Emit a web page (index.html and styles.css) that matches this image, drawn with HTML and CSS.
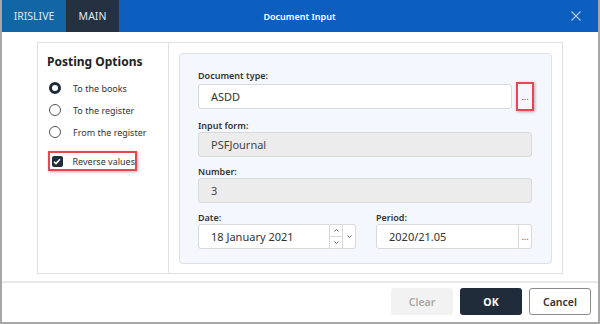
FILE: index.html
```html
<!DOCTYPE html>
<html lang="en">
<head>
  <meta charset="UTF-8" />
  <title>Document Input</title>
  <link rel="stylesheet" href="styles.css">
</head>
<body>
  <div class="window">
    <header class="titlebar">
      <div class="tab tab-iris">IRISLIVE</div>
      <div class="tab tab-main">MAIN</div>
      <div class="title">Document Input</div>
      <div class="close">
        <svg width="10" height="10" viewBox="0 0 10 10"><path d="M0.5 0.5 L9.5 9.5 M9.5 0.5 L0.5 9.5" stroke="#b5cbe6" stroke-width="1.1"/></svg>
      </div>
    </header>

    <div class="content">
      <div class="panel">
        <div class="options">
          <h3>Posting Options</h3>
          <div class="radio-row"><span class="radio checked"></span>To the books</div>
          <div class="radio-row"><span class="radio"></span>To the register</div>
          <div class="radio-row"><span class="radio"></span>From the register</div>
          <div class="check-row highlight">
            <span class="checkbox">
              <svg width="8" height="7" viewBox="0 0 8 7"><path d="M1 3.8 L3 5.6 L7 1.2" fill="none" stroke="#fff" stroke-width="1.5"/></svg>
            </span>
            Reverse values
          </div>
        </div>

        <div class="form-area">
          <div class="card">
            <div class="field">
              <label>Document type:</label>
              <div class="input-row">
                <div class="input">ASDD</div>
                <div class="dots highlight">...</div>
              </div>
            </div>
            <div class="field">
              <label>Input form:</label>
              <div class="input disabled">PSFJournal</div>
            </div>
            <div class="field">
              <label>Number:</label>
              <div class="input disabled">3</div>
            </div>
            <div class="field-pair">
              <div class="field date-field">
                <label>Date:</label>
                <div class="input-row">
                  <div class="input date">18 January 2021</div>
                  <div class="spin">
                    <span><svg width="5" height="3" viewBox="0 0 5 3"><path d="M0.5 2.5 L2.5 0.5 L4.5 2.5" fill="none" stroke="#555" stroke-width="0.9"/></svg></span>
                    <span><svg width="5" height="3" viewBox="0 0 5 3"><path d="M0.5 0.5 L2.5 2.5 L4.5 0.5" fill="none" stroke="#555" stroke-width="0.9"/></svg></span>
                  </div>
                  <div class="drop"><svg width="5" height="3" viewBox="0 0 5 3"><path d="M0.5 0.5 L2.5 2.5 L4.5 0.5" fill="none" stroke="#555" stroke-width="0.9"/></svg></div>
                </div>
              </div>
              <div class="field period-field">
                <label>Period:</label>
                <div class="input-row joined">
                  <div class="input">2020/21.05</div>
                  <div class="dots plain">...</div>
                </div>
              </div>
            </div>
          </div>
        </div>
      </div>
    </div>

    <footer class="footer">
      <button class="btn btn-clear">Clear</button>
      <button class="btn btn-ok">OK</button>
      <button class="btn btn-cancel">Cancel</button>
    </footer>
  </div>
</body>
</html>
```

FILE: styles.css
```css
* {
  margin: 0;
  padding: 0;
  box-sizing: border-box;
}

body {
  font-family: 'Noto Sans', 'Open Sans', sans-serif;
  background-color: #fff;
  color: #333;
  width: 600px;
  height: 324px;
  overflow: hidden;
}

.window {
  width: 600px;
  height: 324px;
  border: 2px solid #a7a7a7;
  border-top: none;
  display: flex;
  flex-direction: column;
}

/* Title bar */
.titlebar {
  height: 32px;
  background-color: #0c5fbe;
  display: flex;
  align-items: stretch;
  color: #fff;
  font-size: 10.5px;
}

.tab {
  display: flex;
  align-items: center;
  justify-content: center;
  color: #dfe8f2;
}

.tab-iris {
  width: 64px;
  background-color: #1167a6;
}

.tab-main {
  width: 53px;
  background-color: #233140;
}

.title {
  flex: 1;
  display: flex;
  align-items: center;
  justify-content: center;
  font-weight: 600;
  font-size: 9px;
  padding-right: 76px;
}

.close {
  width: 42px;
  display: flex;
  align-items: center;
  justify-content: center;
  padding-right: 2px;
}

/* Main content */
.content {
  flex: 1;
  padding: 10px 35px 7px 35px;
}

.panel {
  height: 100%;
  border: 1px solid #e0e0e0;
  display: flex;
}

.options {
  width: 131px;
  border-right: 1px solid #e0e0e0;
  padding: 10px 0 0 9px;
}

.options h3 {
  font-size: 12px;
  font-weight: 700;
  color: #222;
  margin-bottom: 7px;
}

.radio-row,
.check-row {
  display: flex;
  align-items: center;
  font-size: 9px;
  color: #333;
  height: 22px;
  white-space: nowrap;
}

.radio {
  width: 12px;
  height: 12px;
  border: 1px solid #555;
  border-radius: 50%;
  margin: 0 12px 0 2px;
}

.radio.checked {
  border: 3.5px solid #1f2a36;
}

.check-row {
  margin-top: 8px;
  width: 89px;
  height: 20px;
  margin-left: 1px;
}

.checkbox {
  width: 11px;
  height: 11px;
  background-color: #222d3b;
  border-radius: 2px;
  display: flex;
  align-items: center;
  justify-content: center;
  margin: 0 10px 0 2px;
}

.highlight {
  border: 2px solid #e8454c;
  box-shadow: 1px 1px 3px rgba(0, 0, 0, 0.3);
}

/* Form */
.form-area {
  flex: 1;
  padding: 10px 10px 9px 10px;
}

.card {
  height: 100%;
  background-color: #f4f7fd;
  border: 1px solid #dde1e8;
  border-radius: 4px;
  padding: 15px 19px 0 18px;
}

.field label {
  display: block;
  font-size: 9px;
  font-weight: 600;
  color: #333;
  height: 13px;
  line-height: 13px;
}

.field {
  margin-bottom: 8px;
}

.input {
  height: 25px;
  background-color: #fff;
  border: 1px solid #d9d9d9;
  border-radius: 3px;
  font-size: 11px;
  color: #333;
  padding-left: 12px;
  display: flex;
  align-items: center;
}

.input.disabled {
  background-color: #ececec;
  color: #444;
}

.input-row {
  display: flex;
  align-items: center;
}

.input-row .input {
  flex: 1;
}

.dots {
  font-size: 9px;
  color: #555;
  display: flex;
  align-items: center;
  justify-content: center;
}

.dots.highlight {
  width: 18px;
  height: 29px;
  margin-left: 4px;
  margin-right: -2px;
}

.field-pair {
  display: flex;
  gap: 20px;
}

.date-field {
  width: 158px;
}

.period-field {
  flex: 1;
}

.input.date {
  border-radius: 3px 0 0 3px;
}

.spin {
  width: 13px;
  height: 25px;
  border: 1px solid #d9d9d9;
  border-left: none;
  background-color: #fff;
  display: flex;
  flex-direction: column;
}

.spin span {
  flex: 1;
  display: flex;
  align-items: center;
  justify-content: center;
}

.spin span:first-child {
  border-bottom: 1px solid #d9d9d9;
}

.drop {
  width: 13px;
  height: 25px;
  border: 1px solid #d9d9d9;
  border-left: none;
  border-radius: 0 3px 3px 0;
  background-color: #fff;
  display: flex;
  align-items: center;
  justify-content: center;
}

.joined .input {
  border-radius: 3px 0 0 3px;
}

.dots.plain {
  width: 13px;
  height: 25px;
  background-color: #fff;
  border: 1px solid #d9d9d9;
  border-left: none;
  border-radius: 0 3px 3px 0;
}

/* Footer */
.footer {
  height: 41px;
  border-top: 2px solid #e8e8e8;
  display: flex;
  justify-content: flex-end;
  align-items: center;
  gap: 7px;
  padding: 0 7px 2px 0;
}

.btn {
  width: 62px;
  height: 27px;
  border-radius: 3px;
  font-family: 'Noto Sans', 'Open Sans', sans-serif;
  font-size: 10.5px;
  font-weight: 600;
  border: 1px solid transparent;
}

.btn-clear {
  background-color: #f2f2f2;
  color: #a9a9a9;
}

.btn-ok {
  background-color: #212c3a;
  color: #fff;
  font-weight: 700;
}

.btn-cancel {
  background-color: #fff;
  border-color: #8a8a8a;
  color: #333;
}
```
